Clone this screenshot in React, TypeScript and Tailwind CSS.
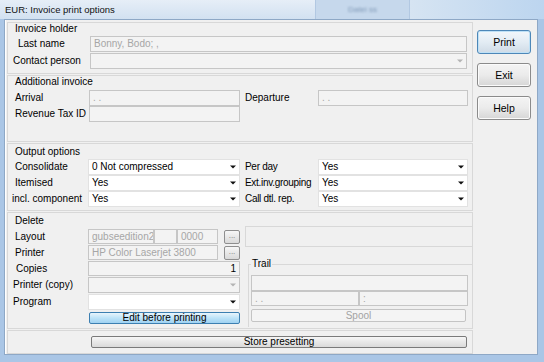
import React from 'react';

type FieldProps = { w: string; value?: string; right?: boolean; muted?: boolean };

function Field({ w, value, right, muted = true }: FieldProps) {
  return (
    <div
      className={`${w} h-full shrink-0 flex items-center px-[3px] border border-[#c6c6c6] bg-[#f3f3f3] whitespace-nowrap overflow-hidden ${
        right ? 'justify-end' : ''
      } ${muted ? 'text-[#a6a6a6]' : 'text-black'}`}
    >
      {value}
    </div>
  );
}

function Arrow({ gray }: { gray?: boolean }) {
  return (
    <svg width="6" height="4" viewBox="0 0 6 4" className="shrink-0">
      <polygon points="0,0.5 6,0.5 3,3.5" fill={gray ? '#b4b4b4' : '#111'} />
    </svg>
  );
}

function Combo({ w, value, disabled }: { w: string; value?: string; disabled?: boolean }) {
  return (
    <div
      className={`${w} h-full shrink-0 flex items-center pl-[3px] pr-[3px] whitespace-nowrap ${
        disabled ? 'bg-[#f3f3f3] border border-[#c6c6c6]' : 'bg-white border border-[#e2e2e2]'
      }`}
    >
      <span className="flex-1">{value}</span>
      <Arrow gray={disabled} />
    </div>
  );
}

function Dots() {
  return (
    <div className="w-[16px] h-[14px] ml-[6px] shrink-0 rounded-[2px] border border-[#8e8e8e] bg-gradient-to-b from-[#f6f6f6] to-[#d9d9d9] flex items-end justify-center text-[8px] text-[#777] pb-[1px]">
      ...
    </div>
  );
}

function Label({ children, pad, w = 'w-[80px]' }: { children: React.ReactNode; pad: string; w?: string }) {
  return <div className={`${w} ${pad} shrink-0 whitespace-nowrap`}>{children}</div>;
}

function SideButton({ children, primary }: { children: React.ReactNode; primary?: boolean }) {
  return (
    <div
      className={`w-[54px] h-[24px] rounded-[3px] border flex items-center justify-center text-[10.5px] ${
        primary
          ? 'border-[#4d87b8] bg-gradient-to-b from-[#f2f7fb] via-[#e3ecf4] to-[#cfdbe6] shadow-[inset_0_0_0_1px_#bfe1f6]'
          : 'border-[#8b8b8b] bg-gradient-to-b from-[#f4f4f4] via-[#ebebeb] to-[#d6d6d6] shadow-[inset_0_0_0_1px_#fbfbfb]'
      }`}
    >
      {children}
    </div>
  );
}

export default function App() {
  return (
    <div className="w-[544px] h-[362px] flex flex-col bg-[#aac6e6] text-[10px] leading-[12px] text-black font-['Liberation_Sans',Arial,sans-serif] overflow-hidden">
      {/* title bar */}
      <div className="h-[19px] shrink-0 flex items-center bg-gradient-to-b from-[#e6eef7] to-[#d2e1f1] pl-[5px] text-[9.5px] text-[#111]">
        <span className="w-[310px] shrink-0">EUR: Invoice print options</span>
        <div className="h-full w-[95px] bg-[#c6d8ec] flex items-center justify-center border-l border-r border-[#b2c8e2]">
          <span className="text-[8px] text-[#7f98b6] blur-[1px]">Datei ss</span>
        </div>
        <div className="flex-1 h-full bg-gradient-to-r from-[#d6e4f2] to-[#bcd5ef]" />
      </div>

      <div className="flex-1 flex pl-[4px] pr-[6px] pb-[9px]">
        <div className="flex-1 flex bg-[#f0f0f0] border border-[#8ea8c6] shadow-[inset_1px_0_0_#ffffff]">
          {/* left column */}
          <div className="w-[466px] ml-[2px] mt-[2px] flex flex-col gap-[1px]">
            {/* Invoice holder */}
            <div className="h-[52px] border border-[#d8d8d8] flex flex-col">
              <div className="h-[12px] pl-[7px]">Invoice holder</div>
              <div className="flex flex-col gap-[1px] mt-[1px]">
                <div className="h-[16px] flex items-center">
                  <Label pad="pl-[10px]" w="w-[82px]">Last name</Label>
                  <Field w="w-[377px]" value="Bonny, Bodo; ," />
                </div>
                <div className="h-[16px] flex items-center">
                  <Label pad="pl-[5px]" w="w-[82px]">Contact person</Label>
                  <Combo w="w-[377px]" disabled />
                </div>
              </div>
            </div>

            {/* Additional invoice */}
            <div className="h-[67px] border border-[#d8d8d8] flex flex-col">
              <div className="h-[12px] pl-[7px]">Additional invoice</div>
              <div className="flex flex-col mt-[2px]">
                <div className="h-[16px] flex items-center">
                  <Label pad="pl-[7px]" w="w-[81px]">Arrival</Label>
                  <Field w="w-[151px]" value=" .  ." />
                  <Label pad="pl-[5px]" w="w-[78px]">Departure</Label>
                  <Field w="w-[150px]" value=" .  ." />
                </div>
                <div className="h-[16px] flex items-center">
                  <Label pad="pl-[7px]" w="w-[81px]">Revenue Tax ID</Label>
                  <Field w="w-[151px]" />
                </div>
              </div>
            </div>

            {/* Output options */}
            <div className="h-[68px] border border-[#d8d8d8] flex flex-col">
              <div className="h-[12px] mt-[2px] pl-[7px]">Output options</div>
              <div className="flex flex-col mt-[1px]">
                {[
                  ['Consolidate', '0 Not compressed', 'Per day', 'Yes', 'pl-[7px]'],
                  ['Itemised', 'Yes', 'Ext.inv.grouping', 'Yes', 'pl-[7px]'],
                  ['incl. component', 'Yes', 'Call dtl. rep.', 'Yes', 'pl-[4px]'],
                ].map(([l1, v1, l2, v2, pad]) => (
                  <div key={l1} className="h-[16px] flex items-center">
                    <Label pad={pad} w="w-[80px]">{l1}</Label>
                    <Combo w="w-[152px]" value={v1} />
                    <Label pad="pl-[5px] tracking-[-0.3px]" w="w-[78px]">{l2}</Label>
                    <Combo w="w-[150px]" value={v2} />
                  </div>
                ))}
              </div>
            </div>

            {/* Delete */}
            <div className="h-[117px] border border-[#d8d8d8] flex">
              <div className="w-[232px] shrink-0 flex flex-col">
                <div className="h-[12px] mt-[2px] pl-[7px]">Delete</div>
                <div className="flex flex-col gap-[1px] mt-[2px]">
                  <div className="h-[15px] flex items-center">
                    <Label pad="pl-[7px]">Layout</Label>
                    <Field w="w-[66px]" value="gubseedition2" />
                    <Field w="w-[23px]" />
                    <Field w="w-[41px]" value="0000" />
                    <Dots />
                  </div>
                  <div className="h-[15px] flex items-center">
                    <Label pad="pl-[7px]">Printer</Label>
                    <Field w="w-[130px]" value="HP Color Laserjet 3800" />
                    <Dots />
                  </div>
                  <div className="h-[15px] flex items-center">
                    <Label pad="pl-[8px]">Copies</Label>
                    <Field w="w-[152px]" value="1" right muted={false} />
                  </div>
                  <div className="h-[16px] flex items-center">
                    <Label pad="pl-[5px]">Printer (copy)</Label>
                    <Combo w="w-[152px]" disabled />
                  </div>
                  <div className="h-[16px] flex items-center">
                    <Label pad="pl-[5px]">Program</Label>
                    <Combo w="w-[152px]" />
                  </div>
                </div>
                <div className="flex mt-[2px]">
                  <div className="w-[81px] shrink-0" />
                  <div className="w-[151px] h-[12px] rounded-[2px] border border-[#3c7fb1] bg-gradient-to-b from-[#e8f5fc] via-[#bde3f8] to-[#9fd2f2] flex items-center justify-center">
                    Edit before printing
                  </div>
                </div>
              </div>

              <div className="flex-1 flex flex-col ml-[5px]">
                <div className="h-[21px] mt-[13px] border border-[#d8d8d8] border-r-0" />
                <div className="relative z-10 self-start ml-[6px] mt-[11px] px-[1px] h-[12px] bg-[#f0f0f0]">Trail</div>
                <div className="ml-[3px] -mt-[6px] h-[63px] border border-[#d8d8d8] border-r-0 border-b-0 flex flex-col pl-[2px] pr-[3px] pt-[10px]">
                  <div className="h-[16px] flex">
                    <Field w="w-[217px]" />
                  </div>
                  <div className="h-[15px] flex">
                    <Field w="w-[108px]" value=" .  ." />
                    <Field w="w-[109px]" value="  :" />
                  </div>
                  <div className="h-[13px] mt-[3px] w-[215px] rounded-[2px] border border-[#c4c4c4] bg-[#f4f4f4] text-[#a3a3a3] flex items-center justify-center">
                    Spool
                  </div>
                </div>
              </div>
            </div>

            {/* Store presetting */}
            <div className="h-[24px] border border-[#d8d8d8] flex items-start pt-[5px]">
              <div className="w-[83px] shrink-0" />
              <div className="w-[376px] h-[12px] rounded-[2px] border border-[#7a7a7a] bg-gradient-to-b from-[#f6f6f6] to-[#dadada] flex items-center justify-center">
                Store presetting
              </div>
            </div>
          </div>

          {/* right buttons */}
          <div className="flex flex-col gap-[9px] ml-[4px] mt-[10px]">
            <SideButton primary>Print</SideButton>
            <SideButton>Exit</SideButton>
            <SideButton>Help</SideButton>
          </div>
        </div>
      </div>
    </div>
  );
}
